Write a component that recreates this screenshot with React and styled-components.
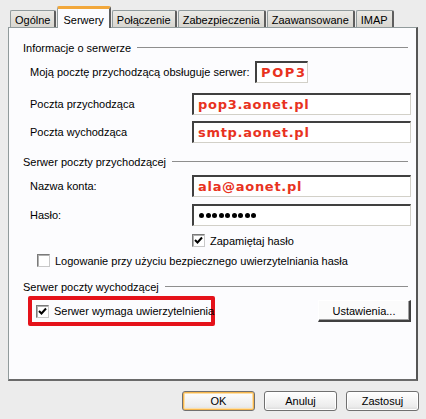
import React from 'react';
import styled, { createGlobalStyle } from 'styled-components';

const GlobalStyle = createGlobalStyle`
  body {
    margin: 0;
    background: #ececec;
    font-family: "Liberation Sans", Arial, sans-serif;
    font-size: 11px;
    color: #000;
  }
`;

const Window = styled.div`
  width: 426px;
  height: 419px;
  background: #ececec;
  box-sizing: border-box;
  display: flex;
  flex-direction: column;
`;

const TabStrip = styled.div`
  display: flex;
  align-items: flex-end;
  height: 21px;
  padding: 6px 0 0 10px;
  position: relative;
  z-index: 1;
`;

const Tab = styled.div`
  box-sizing: border-box;
  height: ${p => (p.$active ? '22px' : '17px')};
  margin-right: 1px;
  margin-bottom: ${p => (p.$active ? '-1px' : '0')};
  padding: ${p => (p.$active ? '2px 5px 0' : '1px 4px 0')};
  display: flex;
  align-items: center;
  background: ${p => (p.$active ? '#fcfcfe' : 'linear-gradient(#ebeae6, #d8d6d0)')};
  border: 1px solid #919b9c;
  border-top: ${p => (p.$active ? '3px solid #f2a83c' : '1px solid #919b9c')};
  border-right: 2px solid #5e5e5e;
  border-bottom: none;
  border-radius: 2px 2px 0 0;
  white-space: nowrap;
`;

const Panel = styled.div`
  box-sizing: border-box;
  height: 354px;
  margin: 0 8px;
  background: #fcfcfe;
  border: 1px solid #919b9c;
  border-right: 2px solid #555;
  border-bottom: 2px solid #6a6a6a;
  padding: 13px 5px 0 14px;
  display: flex;
  flex-direction: column;
`;

const GroupTitle = styled.div`
  display: flex;
  align-items: center;
  gap: 6px;
  height: 13px;
  margin-top: ${p => p.$top || 0}px;
  &::after {
    content: '';
    flex: 1;
    height: 1px;
    margin-right: 3px;
    background: #8e8e8e;
  }
`;

const FieldRow = styled.div`
  display: grid;
  grid-template-columns: ${p => p.$label || 162}px 1fr;
  align-items: center;
  padding-left: 7px;
  margin-top: ${p => p.$top || 0}px;
`;

const Field = styled.div`
  box-sizing: border-box;
  height: 22px;
  width: ${p => (p.$w ? `${p.$w}px` : 'auto')};
  background: #fff;
  border-top: 2px solid #404040;
  border-left: 2px solid #404040;
  border-right: 1px solid #d2d0c8;
  border-bottom: 1px solid #d2d0c8;
  padding: 0 4px;
  display: flex;
  align-items: center;
  font-family: "DejaVu Sans", Verdana, sans-serif;
  font-weight: bold;
  font-size: 13px;
  letter-spacing: ${p => p.$spacing || 0.7}px;
  color: #e8321e;
`;

const Dots = styled.div`
  display: flex;
  gap: 1.5px;
  padding-left: 1px;
`;

const Dot = styled.span`
  width: 5px;
  height: 5px;
  border-radius: 50%;
  background: #000;
`;

const CheckRow = styled.label`
  display: flex;
  align-items: center;
  gap: 5px;
  height: 13px;
  white-space: nowrap;
  padding-left: ${p => p.$indent || 0}px;
  margin-top: ${p => p.$top || 0}px;
`;

const Box = styled.span`
  box-sizing: border-box;
  width: 13px;
  height: 13px;
  background: #fff;
  border-top: 1px solid #7a7a7a;
  border-left: 1px solid #7a7a7a;
  border-right: 1px solid #c8c8c8;
  border-bottom: 1px solid #c8c8c8;
  box-shadow: inset 1px 1px 0 #b0b0b0;
  display: flex;
  align-items: center;
  justify-content: center;
  flex: none;
`;

const OutgoingRow = styled.div`
  display: flex;
  align-items: center;
  justify-content: space-between;
  margin-top: 3px;
`;

const Highlight = styled.div`
  box-sizing: border-box;
  width: 187px;
  height: 30px;
  margin-left: 5px;
  border: 4px solid #e5121a;
  border-radius: 2px;
  display: flex;
  align-items: center;
  padding-left: 4px;
`;

const ClassicButton = styled.button`
  box-sizing: border-box;
  width: 93px;
  height: 22px;
  font-family: inherit;
  font-size: 11px;
  color: #000;
  background: #fbfbfb;
  border: none;
  border-top: 1px solid #fff;
  border-left: 1px solid #fff;
  border-right: 2px solid #404040;
  border-bottom: 2px solid #404040;
  box-shadow: inset -1px -1px 0 #a0a0a0;
  padding: 0;
`;

const Footer = styled.div`
  display: flex;
  justify-content: flex-end;
  gap: 9px;
  padding: 10px 7px 0 0;
`;

const DialogButton = styled.button`
  box-sizing: border-box;
  width: 73px;
  height: 20px;
  font-family: inherit;
  font-size: 11px;
  color: #000;
  background: linear-gradient(#ffffff, #ececec 80%, #d8d8d8);
  border: 1px solid #707070;
  border-radius: 3px;
  padding: 0;
  box-shadow: ${p => (p.$default ? 'inset 0 0 0 1px #f6b64e, inset 0 0 0 2px #fde0a8' : 'inset 0 0 0 1px #fff')};
`;

const Check = () => (
  <svg width="9" height="9" viewBox="0 0 9 9">
    <path d="M1 4 L3.5 6.5 L8 1.5" stroke="#000" strokeWidth="2" fill="none" />
  </svg>
);

const tabs = ['Ogólne', 'Serwery', 'Połączenie', 'Zabezpieczenia', 'Zaawansowane', 'IMAP'];

export default function App() {
  return (
    <Window>
      <GlobalStyle />
      <TabStrip>
        {tabs.map(t => (
          <Tab key={t} $active={t === 'Serwery'}>{t}</Tab>
        ))}
      </TabStrip>
      <Panel>
        <GroupTitle>Informacje o serwerze</GroupTitle>
        <FieldRow $label={225} $top={7}>
          <span>Moją pocztę przychodzącą obsługuje serwer:</span>
          <Field $w={53} $spacing={1.6}>POP3</Field>
        </FieldRow>
        <FieldRow $top={10}>
          <span>Poczta przychodząca</span>
          <Field>pop3.aonet.pl</Field>
        </FieldRow>
        <FieldRow $top={6}>
          <span>Poczta wychodząca</span>
          <Field>smtp.aonet.pl</Field>
        </FieldRow>

        <GroupTitle $top={12}>Serwer poczty przychodzącej</GroupTitle>
        <FieldRow $top={7}>
          <span>Nazwa konta:</span>
          <Field>ala@aonet.pl</Field>
        </FieldRow>
        <FieldRow $top={7}>
          <span>Hasło:</span>
          <Field>
            <Dots>
              {Array.from({ length: 9 }).map((_, i) => <Dot key={i} />)}
            </Dots>
          </Field>
        </FieldRow>
        <CheckRow $indent={169} $top={8}>
          <Box><Check /></Box>
          Zapamiętaj hasło
        </CheckRow>
        <CheckRow $indent={14} $top={7}>
          <Box />
          Logowanie przy użyciu bezpiecznego uwierzytelniania hasła
        </CheckRow>

        <GroupTitle $top={13}>Serwer poczty wychodzącej</GroupTitle>
        <OutgoingRow>
          <Highlight>
            <CheckRow>
              <Box><Check /></Box>
              Serwer wymaga uwierzytelnienia
            </CheckRow>
          </Highlight>
          <ClassicButton>Ustawienia...</ClassicButton>
        </OutgoingRow>
      </Panel>
      <Footer>
        <DialogButton $default>OK</DialogButton>
        <DialogButton>Anuluj</DialogButton>
        <DialogButton>Zastosuj</DialogButton>
      </Footer>
    </Window>
  );
}
